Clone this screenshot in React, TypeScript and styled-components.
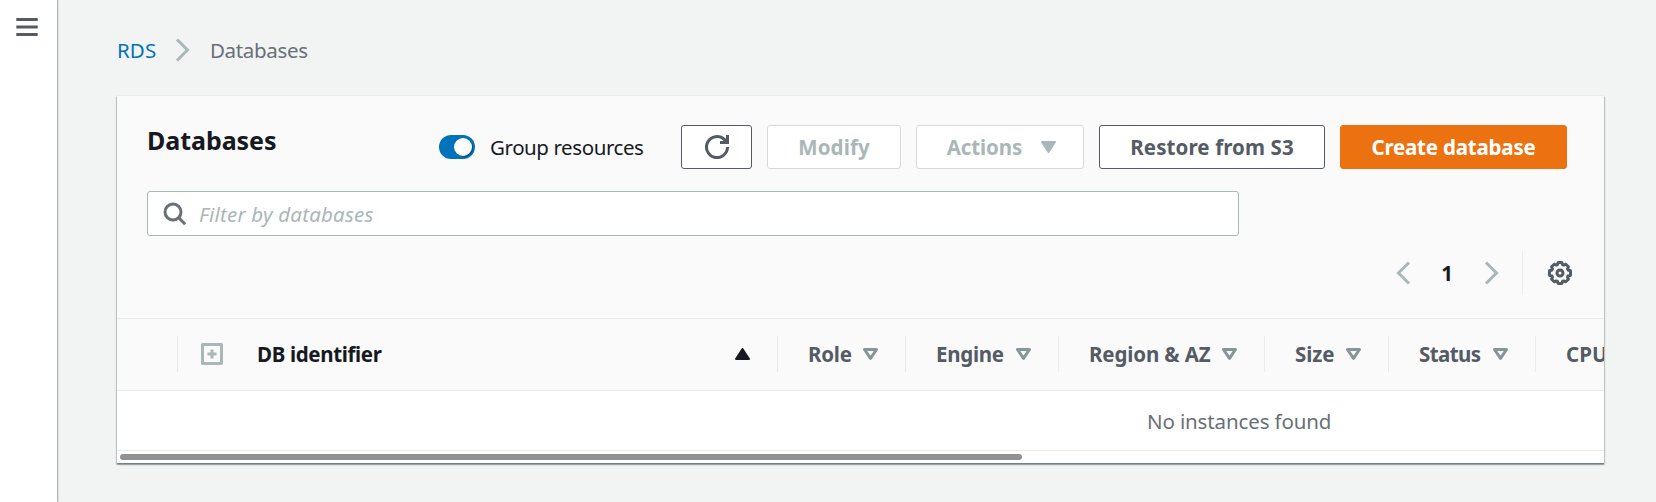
import React from 'react';
import styled, { createGlobalStyle, css } from 'styled-components';

const GlobalStyle = createGlobalStyle`
  * { box-sizing: border-box; }
  body {
    margin: 0;
    background: #f2f3f3;
    color: #16191f;
    font: 400 20.5px/30px "Noto Sans", "Open Sans", sans-serif;
    overflow: hidden;
  }
`;

const Page = styled.div`
  display: flex;
  height: 502px;
`;

const SideBar = styled.aside`
  flex: none;
  width: 57px;
  padding: 15px 0 0 15px;
  background: #fff;
  box-shadow: 1px 0 1px rgba(0, 28, 36, 0.22), 1px 0 2px rgba(0, 28, 36, 0.12);
`;

const Main = styled.main`
  flex: 1;
  min-width: 0;
  padding: 35px 52px 0 60px;
`;

const Icon = styled.svg`
  display: block;
  flex: none;
  width: 24px;
  height: 24px;
  fill: none;
  stroke: currentColor;
  stroke-width: 2;
`;

const Label = styled.span<{ $track?: number }>`
  white-space: nowrap;
  letter-spacing: ${(p) => p.$track ?? 0}px;
`;

const Breadcrumbs = styled.nav`
  display: flex;
  align-items: center;
  height: 30px;
  margin-bottom: 30px;
  color: #687078;
  ${Icon} { color: #aab7b8; margin: 0 15px 0 14px; }
`;

const Crumb = styled.a`
  width: 40px;
  color: #0073bb;
  text-decoration: none;
`;

const Card = styled.section`
  height: 368px;
  background: #fff;
  border-top: 1px solid #eaeded;
  box-shadow: 0 1px 1px rgba(0, 28, 36, 0.3), 1px 2px 1px rgba(0, 28, 36, 0.18),
    -1px 2px 1px rgba(0, 28, 36, 0.18);
`;

const CardHeader = styled.header`
  height: 223px;
  padding: 29px 29px 0 30px;
  background: #fafafa;
  border-bottom: 1px solid #eaeded;
`;

const TitleRow = styled.div`
  display: flex;
  height: 66px;
  padding-right: 8px;
`;

const Title = styled.h2`
  flex: 1;
  margin: 0;
  font-size: 25px;
  line-height: 31px;
`;

const Toggle = styled.label`
  display: flex;
  align-items: center;
  gap: 15px;
  height: 44px;
  width: 242px;
`;

const Track = styled.span`
  width: 36px;
  height: 24px;
  padding: 3px 3px 3px 15px;
  border-radius: 12px;
  background: #0073bb;
`;

const Knob = styled.span`
  display: block;
  width: 18px;
  height: 18px;
  border-radius: 50%;
  background: #fff;
  box-shadow: 1px 1px 1px rgba(0, 0, 0, 0.35);
`;

const Actions = styled.div`
  display: flex;
  gap: 15px;
`;

const variants = {
  normal: css`color: #545b64; border-color: #545b64; background: #fff;`,
  disabled: css`color: #aab7b8; border-color: #d5dbdb; background: #fff;`,
  primary: css`color: #fff; border-color: #ec7211; background: #ec7211;`,
};

const Button = styled.button<{ $variant?: keyof typeof variants; $width: number }>`
  display: flex;
  align-items: center;
  justify-content: center;
  width: ${(p) => p.$width}px;
  height: 44px;
  padding: 0;
  border: 1px solid;
  border-radius: 3px;
  font: inherit;
  font-weight: 700;
  ${(p) => variants[p.$variant ?? 'normal']}
`;

const MenuButton = styled(Button)`
  padding-left: 3px;
`;

const Caret = styled.svg`
  display: block;
  flex: none;
  width: 15px;
  height: 12px;
  stroke-linejoin: round;
  stroke: currentColor;
`;

const ButtonCaret = styled(Caret)`
  margin: 0 0 0 19px;
`;

const SearchBox = styled.div`
  display: flex;
  align-items: center;
  gap: 12px;
  width: 1092px;
  height: 45px;
  padding-left: 15px;
  background: #fff;
  border: 1px solid #aab7b8;
  border-radius: 3px;
  color: #aab7b8;
  font-style: italic;
  ${Icon} { color: #687078; }
`;

const Pagination = styled.div`
  display: flex;
  align-items: center;
  justify-content: flex-end;
  height: 44px;
  margin-top: 15px;
  padding-right: 2px;
  color: #aab7b8;
`;

const PageNumber = styled.span`
  width: 65px;
  padding-right: 1px;
  text-align: center;
  color: #16191f;
  font-weight: 700;
`;

const Settings = styled.div`
  display: flex;
  align-items: center;
  justify-content: flex-end;
  width: 51px;
  height: 44px;
  margin-left: 18px;
  padding-right: 1px;
  border-left: 1px solid #eaeded;
  color: #545b64;
`;

const TableScroller = styled.div`
  overflow: hidden;
`;

const HeadRow = styled.div`
  display: flex;
  align-items: center;
  width: 1600px;
  height: 72px;
  padding-bottom: 1px;
  background: #fafafa;
  border-bottom: 1px solid #eaeded;
`;

const HeadCell = styled.div<{ $width: number; $active?: boolean }>`
  display: flex;
  flex: none;
  align-items: center;
  width: ${(p) => p.$width}px;
  height: 36px;
  padding: 0 27px 1px 30px;
  border-right: 1px solid #eaeded;
  color: ${(p) => (p.$active ? '#16191f' : '#545b64')};
  font-weight: 700;
  ${Label} { flex: 1; }
  ${Caret} { color: ${(p) => (p.$active ? '#16191f' : '#879596')}; }
`;

const IdentifierCell = styled(HeadCell)`
  padding-left: 22px;
  ${Icon} { color: #aab7b8; margin-right: 33px; }
`;

const EmptyRow = styled.div`
  display: flex;
  align-items: center;
  height: 60px;
  padding-left: 1030px;
  border-bottom: 1px solid #eaeded;
  color: #687078;
`;

const ScrollTrack = styled.div`
  height: 12px;
  padding: 3px;
`;

const ScrollThumb = styled.div`
  width: 902px;
  height: 6px;
  border-radius: 3px;
  background: #919191;
`;

const columns = [
  { name: 'Role', width: 128, track: -0.2 },
  { name: 'Engine', width: 153, track: -0.28 },
  { name: 'Region & AZ', width: 206, track: -0.13 },
  { name: 'Size', width: 124, track: -0.1 },
  { name: 'Status', width: 147, track: -0.58 },
];

const ChevronRight = () => (
  <Icon viewBox="0 0 16 16"><path d="M4 1l7 7-7 7" /></Icon>
);

const SortDown = () => (
  <Caret viewBox="0 0 15 12"><path d="M1.5 1.5h12L7.5 10.3z" fill="none" strokeWidth="3" /></Caret>
);

export default function App() {
  return (
    <>
      <GlobalStyle />
      <Page>
        <SideBar>
          <Icon viewBox="0 0 24 24" color="#545b64">
            <path d="M1.3 4.5h21.4M1.3 12h21.4M1.3 19.5h21.4" strokeWidth="3" />
          </Icon>
        </SideBar>
        <Main>
          <Breadcrumbs>
            <Crumb><Label $track={0.1}>RDS</Label></Crumb>
            <ChevronRight />
            <Label $track={-0.34}>Databases</Label>
          </Breadcrumbs>
          <Card>
            <CardHeader>
              <TitleRow>
                <Title><Label $track={-0.05}>Databases</Label></Title>
                <Toggle>
                  <Track><Knob /></Track>
                  <Label $track={-0.42}>Group resources</Label>
                </Toggle>
                <Actions>
                  <Button $width={71} aria-label="Refresh">
                    <Icon viewBox="0 0 24 24">
                      <path d="M22.5 12A10.5 10.5 0 1 1 19.2 4.4L22 7.5" strokeWidth="3" />
                      <path d="M22.5 0v7.5H15" strokeWidth="3" />
                    </Icon>
                  </Button>
                  <Button $width={134} $variant="disabled"><Label $track={0.12}>Modify</Label></Button>
                  <MenuButton $width={168} $variant="disabled">
                    <Label $track={-0.1}>Actions</Label>
                    <ButtonCaret viewBox="0 0 15 12">
                      <path d="M1 1h13L7.5 11z" fill="currentColor" strokeWidth="2" />
                    </ButtonCaret>
                  </MenuButton>
                  <Button $width={226}><Label $track={0.11}>Restore from S3</Label></Button>
                  <Button $width={227} $variant="primary"><Label $track={-0.2}>Create database</Label></Button>
                </Actions>
              </TitleRow>
              <SearchBox>
                <Icon viewBox="0 0 24 24">
                  <circle cx="10" cy="10" r="8" strokeWidth="3" />
                  <path d="M15.7 15.7l6.5 6.5" strokeWidth="3" />
                </Icon>
                <Label $track={0.2}>Filter by databases</Label>
              </SearchBox>
              <Pagination>
                <Icon viewBox="0 0 16 16"><path d="M12 1L5 8l7 7" /></Icon>
                <PageNumber>1</PageNumber>
                <ChevronRight />
                <Settings>
                  <Icon viewBox="0 0 24 24">
                    <path
                      d="M10.2 1.5h3.6l.8 2.1 1.1.5 2.1-.9 2.6 2.6-.9 2.1.5 1.1 2.5.8v4.4l-2.5.8-.5 1.1.9 2.1-2.6 2.6-2.1-.9-1.1.5-.8 2.1h-3.6l-.8-2.1-1.1-.5-2.1.9-2.6-2.6.9-2.1-.5-1.1-2.5-.8V9.8l2.5-.8.5-1.1-.9-2.1 2.6-2.6 2.1.9 1.1-.5z"
                      strokeWidth="3"
                      strokeLinejoin="round"
                    />
                    <circle cx="12" cy="12" r="3" strokeWidth="3" />
                  </Icon>
                </Settings>
              </Pagination>
            </CardHeader>
            <TableScroller>
              <HeadRow>
                <HeadCell $width={61} />
                <IdentifierCell $width={600} $active>
                  <Icon viewBox="0 0 24 24">
                    <path d="M2.5 2.5h19v19h-19zM12 7.5v9M7.5 12h9" strokeWidth="3" strokeLinejoin="round" />
                  </Icon>
                  <Label $track={-0.35}>DB identifier</Label>
                  <Caret viewBox="0 0 15 12">
                    <path d="M1 11h13L7.5 1z" fill="currentColor" strokeWidth="2" />
                  </Caret>
                </IdentifierCell>
                {columns.map((c) => (
                  <HeadCell key={c.name} $width={c.width}>
                    <Label $track={c.track}>{c.name}</Label>
                    <SortDown />
                  </HeadCell>
                ))}
                <HeadCell $width={160}><Label>CPU</Label></HeadCell>
              </HeadRow>
            </TableScroller>
            <EmptyRow><Label $track={-0.13}>No instances found</Label></EmptyRow>
            <ScrollTrack><ScrollThumb /></ScrollTrack>
          </Card>
        </Main>
      </Page>
    </>
  );
}
